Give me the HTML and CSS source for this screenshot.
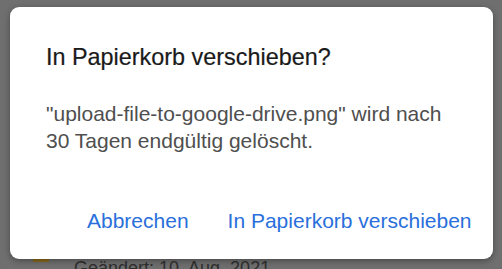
FILE: index.html
```html
<!DOCTYPE html>
<html lang="de">
<head>
    <meta charset="UTF-8">
    <meta name="viewport" content="width=device-width, initial-scale=1.0">
    <title>In Papierkorb verschieben</title>
    <link rel="stylesheet" href="styles.css">
</head>
<body>

    <div class="dialog">
        <h2 class="dialog-title">In Papierkorb verschieben?</h2>
        <p class="dialog-text">"upload-file-to-google-drive.png" wird nach 30 Tagen endgültig gelöscht.</p>
        <div class="dialog-actions">
            <button class="btn">Abbrechen</button>
            <button class="btn">In Papierkorb verschieben</button>
        </div>
    </div>

    <div class="file-row">
        <span class="file-icon"></span>
        <span class="file-meta">Geändert: 10. Aug. 2021</span>
    </div>

</body>
</html>
```

FILE: styles.css
```css
body {
    font-family: "Liberation Sans", Arial, sans-serif;
    margin: 0;
    padding: 7px 0 0 10px;
    background-color: #6f6f6f;
    height: 269px;
    box-sizing: border-box;
    overflow: hidden;
}

.dialog {
    width: 483px;
    height: 252px;
    box-sizing: border-box;
    background-color: #fff;
    border-radius: 9px;
    padding: 36px 20px 0 36px;
    box-shadow: 0 2px 6px rgba(0, 0, 0, 0.35);
    position: relative;
    z-index: 1;
}

.dialog-title {
    margin: 0;
    font-size: 23.4px;
    font-weight: normal;
    color: #1a1a1a;
    line-height: 28px;
    -webkit-text-stroke: 0.2px #1a1a1a;
}

.dialog-text {
    margin: 29px 0 0;
    max-width: 414px;
    font-size: 21px;
    line-height: 27px;
    color: #4f4f4f;
}

.dialog-actions {
    display: flex;
    gap: 39px;
    margin-top: 55px;
    padding-left: 41px;
}

.btn {
    background: none;
    border: none;
    padding: 0;
    font-family: inherit;
    font-size: 21px;
    color: #2a6fdb;
    cursor: pointer;
}

.file-row {
    display: flex;
    align-items: flex-start;
}

.file-icon {
    width: 16px;
    height: 3px;
    margin: 0 0 0 23px;
    background-color: #8a6a1c;
}

.file-meta {
    margin-left: 25px;
    font-size: 18px;
    line-height: 18px;
    color: #2e2e2e;
}
```
